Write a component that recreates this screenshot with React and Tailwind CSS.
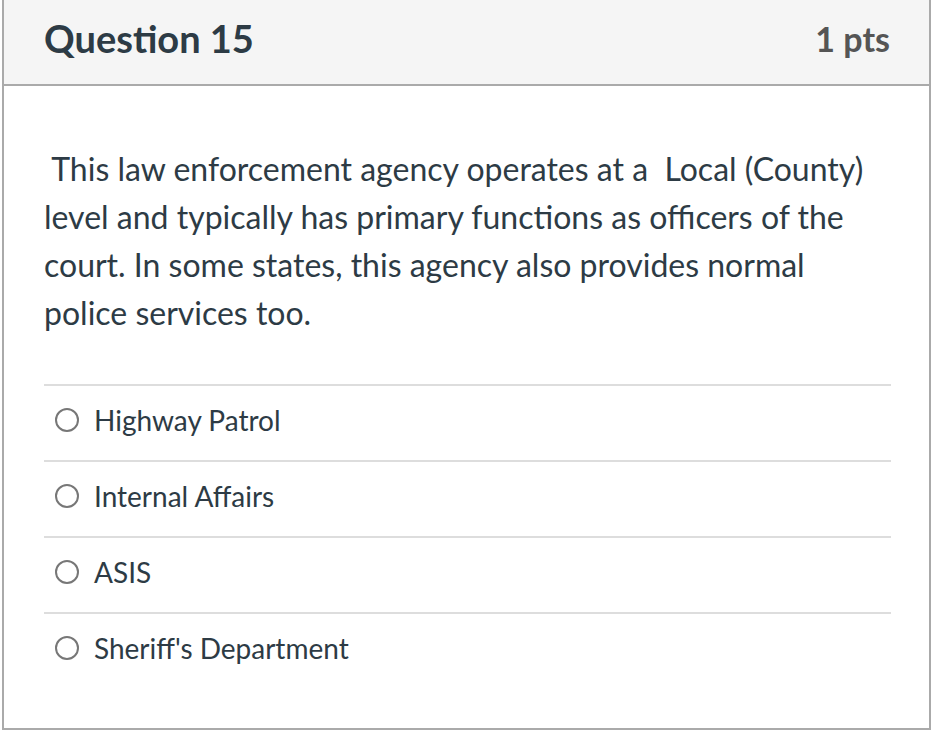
import React from 'react';

const answers = ['Highway Patrol', 'Internal Affairs', 'ASIS', "Sheriff's Department"];

const Radio = () => (
  <span className="w-[24px] h-[24px] rounded-full border-2 border-[#777] bg-white shrink-0" />
);

export default function App() {
  return (
    <div className="w-[932px] h-[732px] bg-white pl-[2px] pr-[1px] pb-[2px] font-['Lato','Liberation_Sans',sans-serif]">
      <div className="h-full border-x-2 border-b-2 border-[#aaa] flex flex-col">
        <div className="h-[86px] bg-[#f5f5f5] border-b-2 border-[#aaa] flex items-center justify-between pl-[40px] pr-[39px] pb-[8px]">
          <h2 className="text-[38px] font-bold text-[#2d3b45]">Question 15</h2>
          <span className="text-[34px] font-bold text-[#555]">1 pts</span>
        </div>
        <div className="pl-[40px] pr-[38px] pt-[59px]">
          <p className="text-[32px] leading-[48px] text-[#2d3b45]">
            &nbsp;This law enforcement agency operates at a&nbsp; Local (County) level and typically has primary functions as officers of the court. In some states, this agency also provides normal police services too.
          </p>
          <div className="mt-[47px]">
            {answers.map((a) => (
              <div key={a} className="border-t-2 border-[#ddd] h-[76px] flex items-center gap-[15px] pl-[11px] pb-[6px]">
                <Radio />
                <span className="text-[28px] text-[#2d3b45]">{a}</span>
              </div>
            ))}
          </div>
        </div>
      </div>
    </div>
  );
}
